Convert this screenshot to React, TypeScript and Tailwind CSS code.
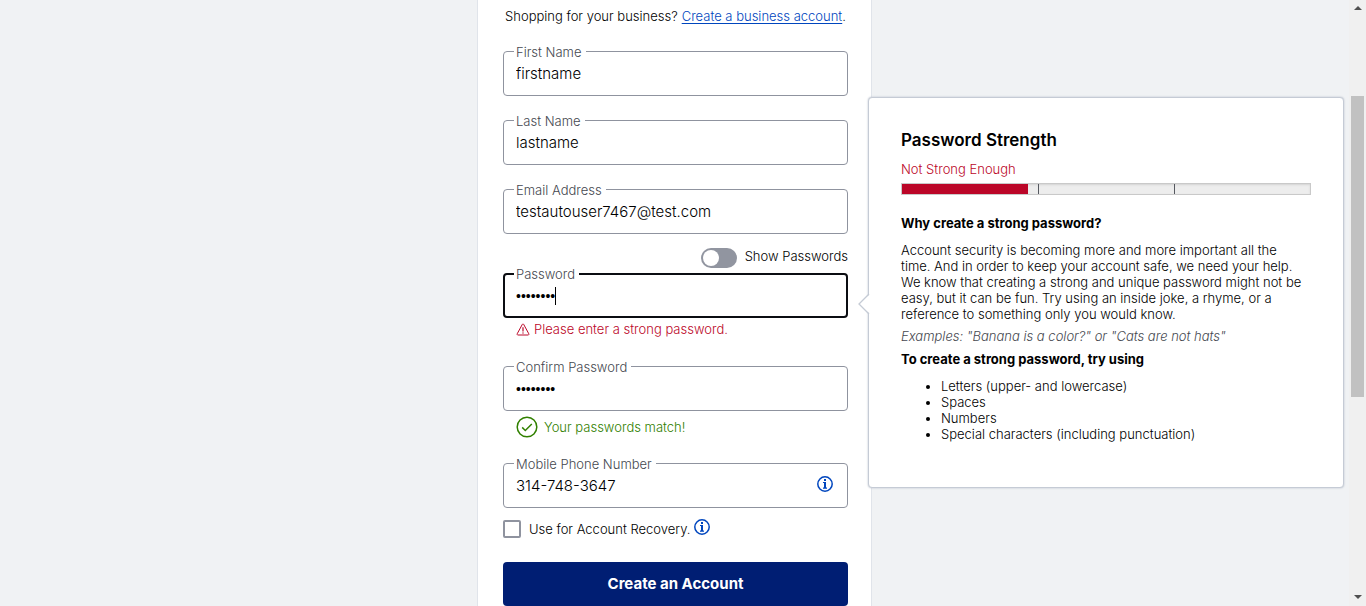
import { useState, type ReactNode } from "react";

type FieldProps = {
  id: string;
  label: string;
  value: string;
  type?: string;
  active?: boolean;
  children?: ReactNode;
};

function Field({ id, label, value, type = "text", active = false, children }: FieldProps) {
  const [text, setText] = useState(value);
  const isPassword = type === "password";
  return (
    <div className="relative">
      <label
        htmlFor={id}
        className="absolute -top-[9px] left-[11px] bg-white pr-1 pl-0.5 text-[13px] leading-5 text-[#45484f]"
      >
        {label}
      </label>
      <input
        id={id}
        type={type}
        value={text}
        onChange={(e) => setText(e.target.value)}
        className={[
          "block h-[45px] w-full rounded bg-white text-black outline-none",
          active ? "border-2 border-[#0b0d12] pl-[11px]" : "border border-[#8f939f] pl-3",
          isPassword ? "font-['Liberation_Sans',sans-serif] text-[14px]" : "text-[15px]",
        ].join(" ")}
      />
      {children}
    </div>
  );
}

function InfoIcon() {
  return (
    <svg viewBox="0 0 16 16" className="size-4" fill="none" aria-hidden="true">
      <circle cx="8" cy="8" r="7.2" stroke="#0046be" strokeWidth="1.5" />
      <rect x="7" y="3" width="2" height="2" fill="#0046be" />
      <path d="M6 6.5H8V12M6 12.2H10" stroke="#0046be" strokeWidth="1.2" />
      <path d="M8 6V12" stroke="#0046be" strokeWidth="2" />
    </svg>
  );
}

function WarningIcon() {
  return (
    <svg viewBox="0 0 14 13" className="h-[13px] w-[14px]" fill="none" aria-hidden="true">
      <path d="M6.3 1.4a.8.8 0 0 1 1.4 0l5.1 9.4a.8.8 0 0 1-.7 1.2H1.9a.8.8 0 0 1-.7-1.2Z" stroke="#bb0628" />
      <path d="M7 4.2V8.4" stroke="#bb0628" strokeWidth="1.2" />
      <circle cx="7" cy="10" r=".7" fill="#bb0628" />
    </svg>
  );
}

function CheckIcon() {
  return (
    <svg viewBox="0 0 22 22" className="size-[22px]" fill="none" aria-hidden="true">
      <circle cx="11" cy="11" r="9.8" stroke="#318000" strokeWidth="1.5" />
      <path d="M6.2 11.4 9.3 14.5 15.8 8" stroke="#318000" strokeWidth="1.5" />
    </svg>
  );
}

function StrengthPanel() {
  return (
    <section className="absolute -top-44 left-full z-10 ml-5 w-[476px] rounded border border-[#c5cbd5] bg-white px-8 pt-[30px] pb-[45px] text-[13px] leading-4 text-black shadow-[0_0_2px_#b4bbc8]">
      <svg
        viewBox="0 0 12 22"
        className="absolute top-[195px] -left-[11px] h-[22px] w-3"
        fill="none"
        aria-hidden="true"
      >
        <path d="M12 1 1.5 11 12 21Z" fill="#fff" />
        <path d="M11 1 1 11 11 21" stroke="#c5cbd5" strokeWidth="1.3" />
      </svg>
      <h2 className="text-[17px] leading-6 font-semibold">Password Strength</h2>
      <p className="mt-[9px] text-[#bb0628]">Not Strong Enough</p>
      <div
        role="meter"
        aria-label="Password strength"
        aria-valuemin={0}
        aria-valuemax={100}
        aria-valuenow={31}
        className="relative mt-1.5 h-3 border border-[#c9c9c9] bg-[#ededed] shadow-[inset_0_1px_2px_#d4d4d4]"
      >
        <div className="h-full w-[31%] bg-[#bb0628]" />
        <div className="absolute inset-0 grid grid-cols-3">
          <span className="-mr-px border-r border-[#55585f]" />
          <span className="-mr-px border-r border-[#55585f]" />
        </div>
      </div>
      <h3 className="mt-5 font-bold">Why create a strong password?</h3>
      <p className="mt-[11px] pr-1">
        Account security is becoming more and more important all the time. And in order to keep your
        account safe, we need your help. We know that creating a strong and unique password might not
        be easy, but it can be fun. Try using an inside joke, a rhyme, or a reference to something
        only you would know.
      </p>
      <p className="mt-1.5 text-[#45484f] italic">
        Examples: "Banana is a color?" or "Cats are not hats"
      </p>
      <h3 className="mt-[7px] font-bold">To create a strong password, try using</h3>
      <ul className="mt-[11px] list-disc pl-10">
        <li>Letters (upper- and lowercase)</li>
        <li>Spaces</li>
        <li>Numbers</li>
        <li>Special characters (including punctuation)</li>
      </ul>
    </section>
  );
}

export default function App() {
  const [show, setShow] = useState(false);
  const [recovery, setRecovery] = useState(false);
  return (
    <div className="flex min-h-screen bg-[#f0f2f4] font-['Inter',sans-serif] text-[13px] leading-5 font-light text-black">
      <main className="flex flex-1 justify-center">
        <form
          className="w-[395px] border-x border-[#e0e4ea] bg-white pr-[23px] pl-[25px]"
          onSubmit={(e) => e.preventDefault()}
        >
          <p className="flex justify-center gap-1 pt-1.5 whitespace-nowrap">
            Shopping for your business?
            <span>
              <a href="#business" className="text-[#0046be] underline underline-offset-2">
                Create a business account
              </a>
              .
            </span>
          </p>
          <div className="mt-[25px] flex flex-col gap-6">
            <Field id="first" label="First Name" value="firstname" />
            <Field id="last" label="Last Name" value="lastname" />
            <Field id="email" label="Email Address" value="testautouser7467@test.com" type="email" />
          </div>
          <div className="mt-3 flex justify-end gap-2">
            <input
              id="show"
              type="checkbox"
              role="switch"
              checked={show}
              onChange={(e) => setShow(e.target.checked)}
              className="mt-0.5 h-5 w-9 appearance-none rounded-full bg-[#9195a0] p-0.5 before:block before:size-4 before:rounded-full before:bg-white checked:bg-[#0046be] checked:before:ml-4"
            />
            <label htmlFor="show">Show Passwords</label>
          </div>
          <div className="mt-[5px]">
            <Field id="password" label="Password" value="password" type={show ? "text" : "password"} active>
              <span className="absolute top-3.5 left-[52px] h-[18px] w-px bg-black" />
              <StrengthPanel />
            </Field>
          </div>
          <p className="mt-px flex items-center gap-1 pl-[13px] text-[#bb0628]">
            <WarningIcon />
            Please enter a strong password.
          </p>
          <div className="mt-[27px]">
            <Field id="confirm" label="Confirm Password" value="password" type={show ? "text" : "password"} />
          </div>
          <p className="mt-[5px] flex items-center gap-1.5 pl-[13px] text-[#318000]">
            <CheckIcon />
            Your passwords match!
          </p>
          <div className="mt-[25px]">
            <Field id="phone" label="Mobile Phone Number" value="314-748-3647" type="tel">
              <button type="button" aria-label="About mobile phone number" className="absolute top-[13px] right-[15px]">
                <InfoIcon />
              </button>
            </Field>
          </div>
          <div className="mt-3 flex items-start gap-2">
            <input
              id="recovery"
              type="checkbox"
              checked={recovery}
              onChange={(e) => setRecovery(e.target.checked)}
              className="size-[18px] appearance-none rounded-xs border-2 border-[#8f939f] bg-white checked:bg-[#0046be]"
            />
            <label htmlFor="recovery" className="leading-[18px]">
              Use for Account Recovery.
            </label>
            <button type="button" aria-label="About account recovery" className="-mt-px -ml-1">
              <InfoIcon />
            </button>
          </div>
          <button type="submit" className="mt-6 h-11 w-full rounded bg-[#001e73] text-[15px] font-bold text-white">
            Create an Account
          </button>
        </form>
      </main>
      <div aria-hidden="true" className="flex w-[17px] flex-col items-center bg-[#f0f0f0]">
        <svg viewBox="0 0 8 4" className="mt-1.5 h-1 w-2">
          <path d="M0 4 4 0 8 4Z" fill="#505050" />
        </svg>
        <div className="mt-[86px] h-[301px] w-[13px] bg-[#c1c1c1]" />
        <svg viewBox="0 0 8 4" className="mt-auto mb-[7px] h-1 w-2">
          <path d="M0 0 4 4 8 0Z" fill="#505050" />
        </svg>
      </div>
    </div>
  );
}
